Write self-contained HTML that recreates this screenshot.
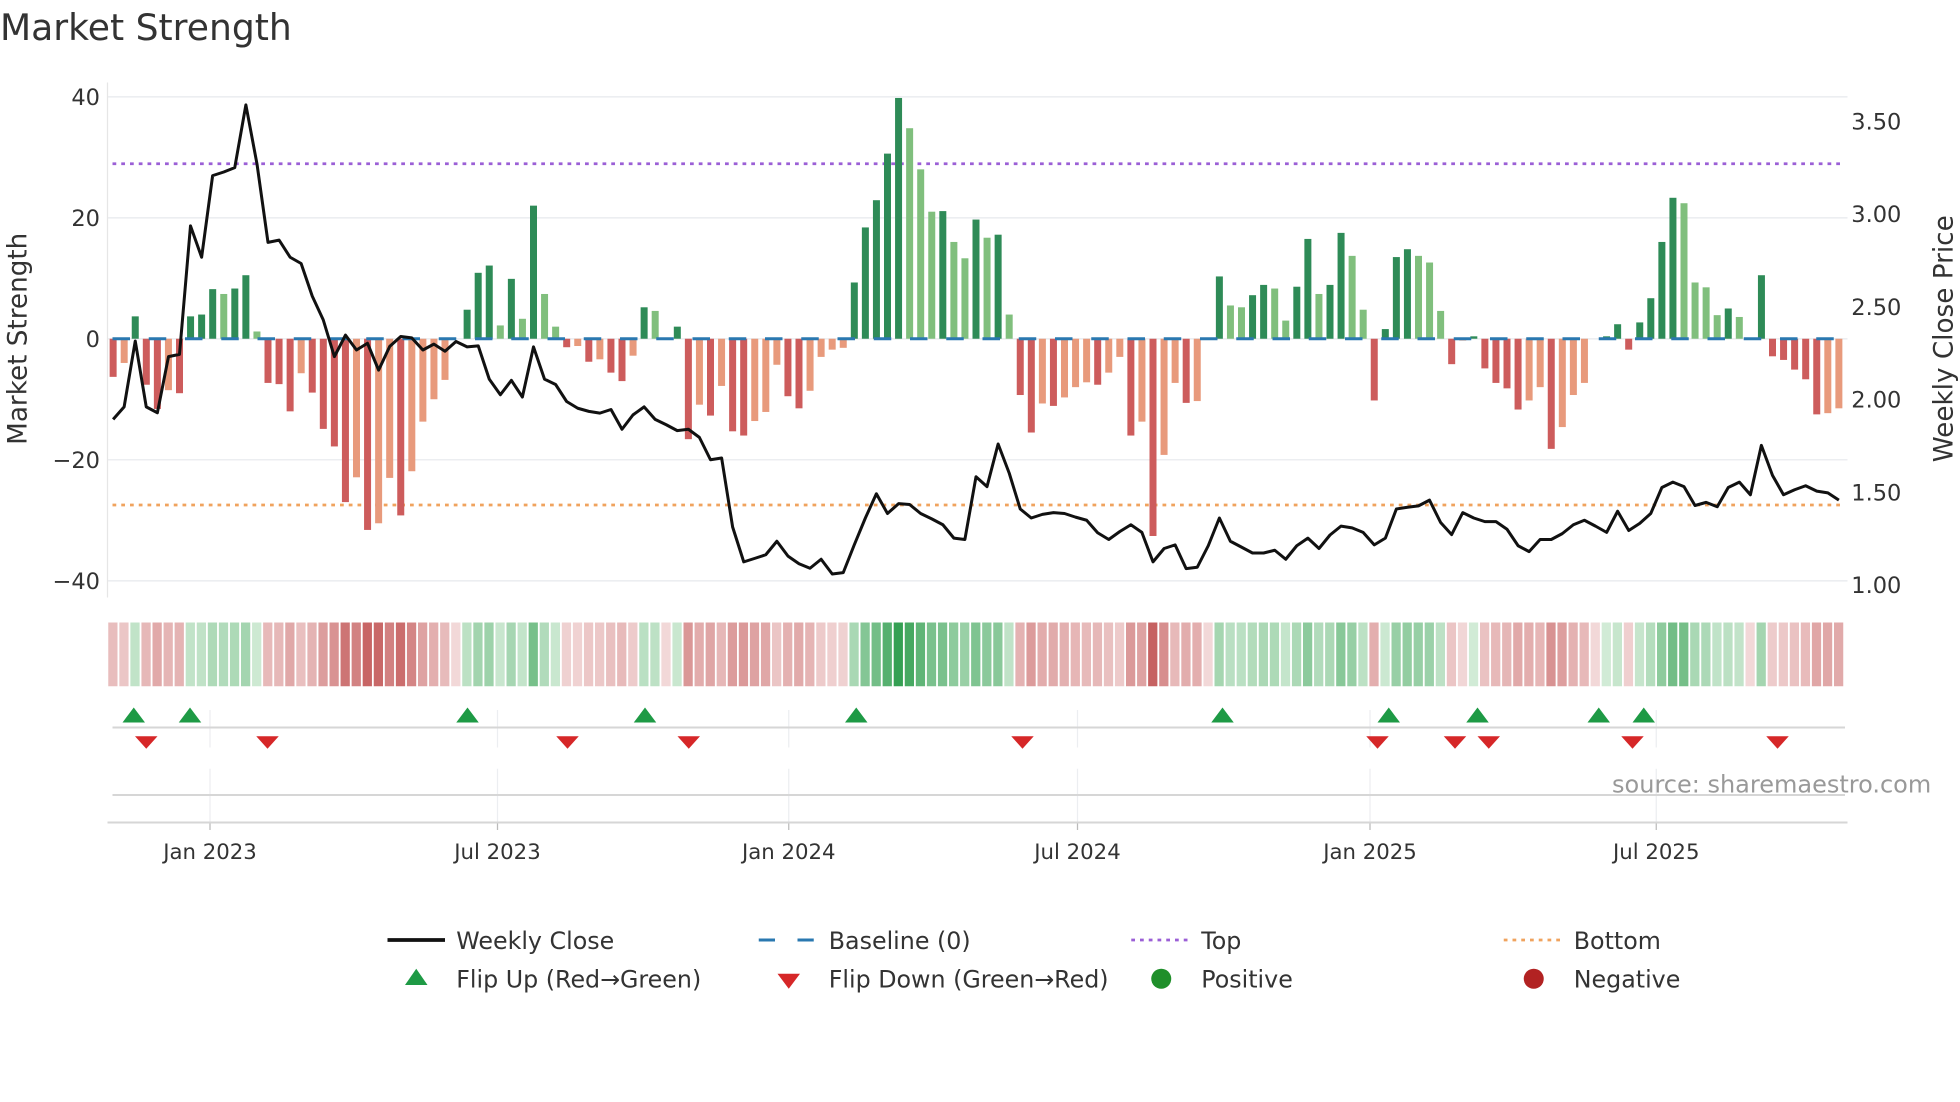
<!DOCTYPE html>
<html><head><meta charset="utf-8"><style>
html,body{margin:0;padding:0;background:#fff;}
svg{display:block;}
text{font-family:"DejaVu Sans","Liberation Sans",sans-serif;}
</style></head><body>
<svg id="s" width="1960" height="1102" viewBox="0 0 1568 881.6" xmlns="http://www.w3.org/2000/svg"></svg>
<script>
var V=[-6.3,-4,3.7,-7.6,-11.6,-8.5,-9,3.7,4,8.2,7.4,8.3,10.5,1.2,-7.3,-7.5,-12,-5.7,-8.9,-14.9,-17.8,-27,-22.9,-31.6,-30.5,-23,-29.2,-21.9,-13.7,-10,-6.8,0,4.8,10.9,12.1,2.2,9.9,3.3,22,7.4,2,-1.4,-1.2,-3.8,-3.4,-5.6,-7,-2.8,5.2,4.6,0,2,-16.6,-10.9,-12.7,-7.8,-15.3,-16,-13.6,-12.1,-4.3,-9.5,-11.5,-8.6,-3,-1.8,-1.5,9.3,18.4,22.9,30.6,39.8,34.8,28,21,21.1,16,13.3,19.7,16.7,17.2,4,
-9.3,-15.5,-10.7,-11.1,-9.7,-8,-7.2,-7.6,-5.6,-3,-16,-13.7,-32.6,-19.2,-7.3,-10.6,-10.3,0,10.3,5.5,5.2,7.2,8.9,8.3,3,8.6,16.5,7.4,8.9,17.5,13.7,4.8,-10.2,1.6,13.5,14.8,13.7,12.6,4.6,-4.2,-0.3,0.4,-4.9,-7.3,-8.2,-11.7,-10.2,-8,-18.2,-14.6,-9.3,-7.3,0,0.4,2.4,-1.8,2.7,6.7,16,23.3,22.4,9.3,8.5,3.9,5,3.6,0,10.5,-2.9,-3.5,-5.1,-6.7,-12.5,-12.3,-11.5];
var L=[0,1,0,0,0,1,0,0,0,0,1,0,0,1,0,0,0,1,0,0,0,0,1,0,1,1,0,1,1,1,1,0,0,0,0,1,0,1,0,1,1,0,1,0,1,0,0,1,0,1,0,0,0,1,0,1,0,0,1,1,1,0,0,1,1,1,1,0,0,0,0,0,1,1,1,0,1,1,0,1,0,1,
0,0,1,0,1,1,1,0,1,1,0,1,0,1,1,0,1,0,0,1,1,0,0,1,1,0,0,1,0,0,1,1,0,0,0,0,1,1,1,0,1,0,0,0,0,0,1,1,0,1,1,1,0,0,0,0,0,0,0,0,1,1,1,1,0,1,0,0,0,0,0,0,0,1,1];
var P=[940,912,765,912,925,800,795,508,578,396,388,378,238,370,545,540,578,592,665,718,800,752,785,770,830,777,755,758,785,772,788,766,778,776,850,885,853,890,778,850,862,900,915,922,926,918,962,930,912,940,952,965,962,980,1030,1026,1180,1258,1250,1242,1212,1245,1262,1272,1252,1285,1282,1220,1160,1106,1150,1128,1130,1150,1162,1175,1205,1208,1068,1090,995,1060,1140,1160,1152,1148,1150,1158,1165,1193,1208,1190,1175,1192,1258,1228,1220,1273,1270,1222,1160,1212,1225,1238,1238,1232,1252,1222,1205,1228,1198,1178,1182,1192,1220,1205,1140,1136,1133,1120,1170,1197,1148,1160,1168,1168,1185,1222,1235,1208,1208,1195,1175,1165,1178,1192,1145,1188,1172,1150,1092,1080,1090,1132,1125,1135,1092,1080,1108,998,1065,1108,1097,1088,1100,1104,1120];
var o=[];
function X(i){return 90.5+i*8.85;}
function Y(v){return 271-v*4.84;}
o.push('<text x="0" y="32" font-size="28.9" fill="#333">Market Strength</text>');
[40,20,0,-20,-40].forEach(function(v){o.push('<line x1="86" x2="1478" y1="'+Y(v)+'" y2="'+Y(v)+'" stroke="#eceef1" stroke-width="1.3"/>');
o.push('<text x="80" y="'+(Y(v)+6.5)+'" font-size="18" fill="#333" text-anchor="end">'+(v<0?'\u2212'+(-v):v)+'</text>');});
o.push('<line x1="86" x2="86" y1="66" y2="478" stroke="#e6e6e6" stroke-width="1"/>');
['3.50','3.00','2.50','2.00','1.50','1.00'].forEach(function(t,k){o.push('<text x="1481" y="'+(97+k*74.2+6.5)+'" font-size="18" fill="#333">'+t+'</text>');});
o.push('<text transform="translate(21,271) rotate(-90)" font-size="21" fill="#333" text-anchor="middle">Market Strength</text>');
o.push('<text transform="translate(1562,271) rotate(-90)" font-size="21" fill="#333" text-anchor="middle">Weekly Close Price</text>');
o.push('<line x1="90" x2="1476" y1="131" y2="131" stroke="#9b5fd6" stroke-width="2.2" stroke-dasharray="3,4"/>');
o.push('<line x1="90" x2="1476" y1="404" y2="404" stroke="#f0a35e" stroke-width="2.2" stroke-dasharray="3,4"/>');
for(var i=0;i<V.length;i++){var v=V[i];if(v==0)continue;var c=v>0?(L[i]?'#80bf7d':'#2e8b57'):(L[i]?'#e89a7c':'#cd5c5c');
var y0=Math.min(Y(0),Y(v)),h=Math.abs(v*4.84);o.push('<rect x="'+(X(i)-2.8)+'" y="'+y0+'" width="5.6" height="'+h+'" fill="'+c+'"/>');}
o.push('<line x1="90" x2="1476" y1="271" y2="271" stroke="#2a78b0" stroke-width="2.4" stroke-dasharray="14,15"/>');
var pts=P.map(function(z,i){return X(i).toFixed(1)+','+(271+(z-760)*0.3585).toFixed(1);}).join(' ');
o.push('<polyline points="'+pts+'" fill="none" stroke="#111" stroke-width="2.4" stroke-linejoin="round"/>');
function mix(a,b,t){return 'rgb('+a.map(function(x,k){return Math.round(x+(b[k]-x)*t);}).join(',')+')';}
for(var i=0;i<V.length;i++){var v=V[i],c;
if(v>0)c=mix([212,236,216],[52,160,82],Math.min(1,Math.pow(v/40,0.9)));
else c=mix([242,216,216],[198,96,96],Math.min(1,Math.pow(-v/33,0.9)));
o.push('<rect x="'+(X(i)-3.9)+'" y="498" width="7.4" height="51" fill="'+c+'"/>');}
[168,398,631,862,1096,1325].forEach(function(x){o.push('<line x1="'+x+'" x2="'+x+'" y1="568" y2="598" stroke="#eceef1" stroke-width="1"/>');
o.push('<line x1="'+x+'" x2="'+x+'" y1="615" y2="658" stroke="#eceef1" stroke-width="1"/>');
o.push('<line x1="'+x+'" x2="'+x+'" y1="658" y2="664" stroke="#bbb" stroke-width="1"/>');});
o.push('<line x1="90" x2="1476" y1="582" y2="582" stroke="#d6d6d6" stroke-width="1.6"/>');
o.push('<line x1="90" x2="1476" y1="636" y2="636" stroke="#d6d6d6" stroke-width="1.6"/>');
o.push('<line x1="86" x2="1478" y1="658" y2="658" stroke="#d6d6d6" stroke-width="1.6"/>');
[107,152,374,516,685,978,1111,1182,1279,1315].forEach(function(x){o.push('<path d="M'+(x-9)+',578 L'+(x+9)+',578 L'+x+',566 Z" fill="#1e9a45"/>');});
[117,214,454,551,818,1102,1164,1191,1306,1422].forEach(function(x){o.push('<path d="M'+(x-9)+',589 L'+(x+9)+',589 L'+x+',599 Z" fill="#d62728"/>');});
o.push('<text x="1545" y="634" font-size="19.2" fill="#999" text-anchor="end">source: sharemaestro.com</text>');
[['Jan 2023',168],['Jul 2023',398],['Jan 2024',631],['Jul 2024',862],['Jan 2025',1096],['Jul 2025',1325]].forEach(function(a){o.push('<text x="'+a[1]+'" y="687" font-size="17" fill="#333" text-anchor="middle">'+a[0]+'</text>');});
var fs=19;
o.push('<line x1="310" x2="356" y1="752" y2="752" stroke="#111" stroke-width="3"/><text x="365" y="759" font-size="'+fs+'" fill="#333">Weekly Close</text>');
o.push('<line x1="607" x2="651" y1="752" y2="752" stroke="#2a78b0" stroke-width="2.4" stroke-dasharray="13,18"/><text x="663" y="759" font-size="'+fs+'" fill="#333">Baseline (0)</text>');
o.push('<line x1="905" x2="950" y1="752" y2="752" stroke="#9b5fd6" stroke-width="2.2" stroke-dasharray="3,4"/><text x="961" y="759" font-size="'+fs+'" fill="#333">Top</text>');
o.push('<line x1="1203" x2="1248" y1="752" y2="752" stroke="#f0a35e" stroke-width="2.2" stroke-dasharray="3,4"/><text x="1259" y="759" font-size="'+fs+'" fill="#333">Bottom</text>');
o.push('<path d="M324,788 L342,788 L333,775 Z" fill="#1e9a45"/><text x="365" y="790" font-size="'+fs+'" fill="#333">Flip Up (Red\u2192Green)</text>');
o.push('<path d="M622,779 L640,779 L631,791 Z" fill="#d62728"/><text x="663" y="790" font-size="'+fs+'" fill="#333">Flip Down (Green\u2192Red)</text>');
o.push('<circle cx="929" cy="783" r="8" fill="#1f8f2a"/><text x="961" y="790" font-size="'+fs+'" fill="#333">Positive</text>');
o.push('<circle cx="1227" cy="783" r="8" fill="#b22222"/><text x="1259" y="790" font-size="'+fs+'" fill="#333">Negative</text>');
document.getElementById('s').innerHTML=o.join('');
</script>
</body></html>
